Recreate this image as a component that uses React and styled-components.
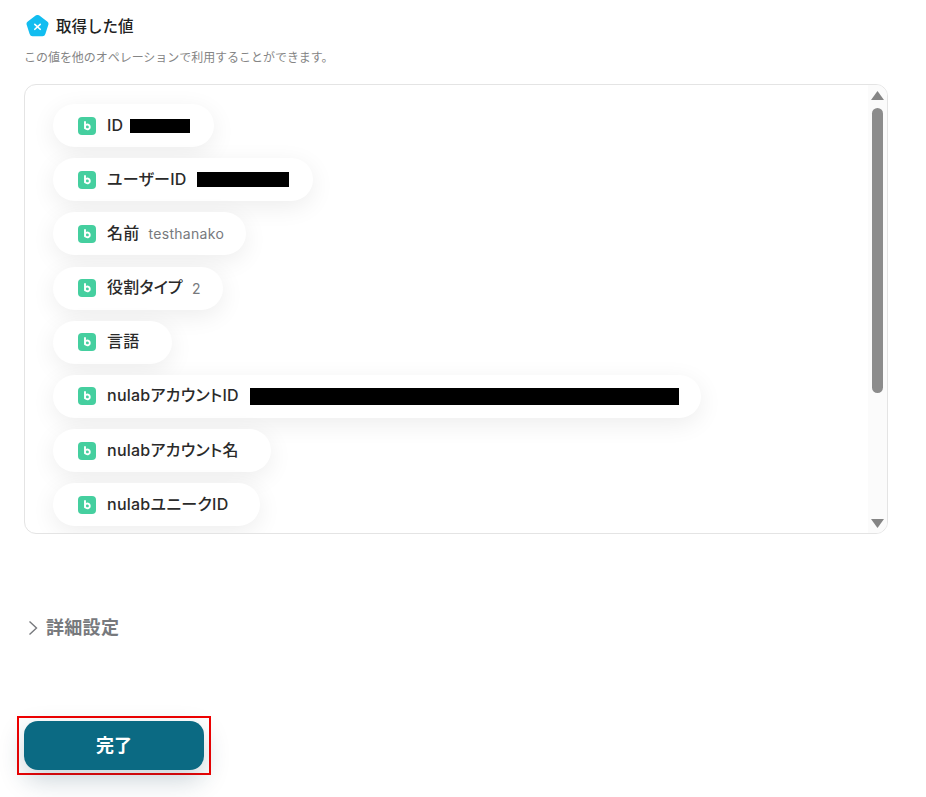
import React from "react";
import styled, { createGlobalStyle } from "styled-components";

const GlobalStyle = createGlobalStyle`
    html, body {
        margin: 0;
        padding: 0;
        background: #fff;
        font-family: Inter, "Noto Sans CJK JP", sans-serif;
    }
`;

const Page = styled.div`
    width: 926px;
    height: 797px;
    padding: 15px 38px 0 24px;
    box-sizing: border-box;
    overflow: hidden;
`;

const TitleRow = styled.div`
    display: flex;
    align-items: center;
    gap: 7px;
    height: 22px;
    padding-left: 2px;
`;

const Title = styled.h2`
    margin: 0;
    padding-bottom: 2px;
    font-size: 15.5px;
    font-weight: 500;
    color: #222;
`;

const Description = styled.p`
    margin: 11px 0 0;
    height: 20px;
    line-height: 20px;
    font-size: 12px;
    letter-spacing: -0.04px;
    color: #858585;
`;

const Panel = styled.div`
    display: flex;
    height: 450px;
    margin-top: 16px;
    box-sizing: border-box;
    border: 1px solid #e4e4e4;
    border-radius: 12px;
    overflow: hidden;
`;

const ValueList = styled.div`
    flex: 1;
    display: flex;
    flex-direction: column;
    align-items: flex-start;
    gap: 11.2px;
    padding: 19px 0 0 28px;
`;

const Pill = styled.div`
    display: flex;
    align-items: center;
    height: 43px;
    padding: 0 24px 0 25px;
    box-sizing: border-box;
    background: #fff;
    border-radius: 22px;
    box-shadow: 0 6px 24px rgba(0, 0, 0, 0.075);
    white-space: nowrap;
`;

const Badge = styled.span`
    display: flex;
    align-items: center;
    justify-content: center;
    flex: none;
    width: 18px;
    height: 18px;
    margin-right: 11px;
    border-radius: 4px;
    background: #45cf9f;
`;

const Label = styled.span`
    margin-right: 8px;
    padding-bottom: 2px;
    font-size: 16px;
    line-height: 22px;
    font-weight: 500;
    font-feature-settings: "palt";
    letter-spacing: 0.25px;
    color: #2a2a2a;
`;

const Value = styled.span`
    margin: 0 -2px 0 1px;
    font-size: 14px;
    letter-spacing: 0.3px;
    color: #77797d;
`;

const Redacted = styled.span`
    display: block;
    margin-left: ${(props) => props.$gap}px;
    margin-right: ${(props) => props.$trail || 0}px;
    width: ${(props) => props.$width}px;
    height: ${(props) => props.$height}px;
    background: #000;
`;

const ScrollTrack = styled.div`
    flex: none;
    width: 19px;
    background: #fbfbfb;
    display: flex;
    flex-direction: column;
    align-items: center;
    padding: 6px 0 5px;
    box-sizing: border-box;
`;

const ScrollThumb = styled.div`
    width: 11px;
    height: 285px;
    margin-top: 8px;
    border-radius: 6px;
    background: #8c8c8c;
`;

const Spacer = styled.div`
    flex: 1;
`;

const DetailRow = styled.div`
    display: flex;
    align-items: center;
    gap: 7px;
    margin-top: 82px;
    height: 24px;
    padding-left: 3px;
`;

const DetailLabel = styled.span`
    font-size: 18px;
    line-height: 24px;
    font-weight: 700;
    letter-spacing: 0.3px;
    color: #77797d;
`;

const ButtonFrame = styled.div`
    width: 194px;
    height: 59px;
    margin: 76px 0 0 -7px;
    box-sizing: border-box;
    border: 2px solid #f00000;
    padding: 3px 5px;
`;

const DoneButton = styled.button`
    display: block;
    width: 180px;
    height: 49px;
    padding: 0 0 4px;
    border: none;
    border-radius: 14px;
    background: #0b6a83;
    color: #fff;
    font-family: inherit;
    font-size: 18px;
    font-weight: 700;
    box-shadow: 0 10px 26px rgba(20, 60, 80, 0.22);
`;

function BacklogIcon() {
    return (
        <svg width="9" height="10" viewBox="0 0 9 10" fill="none">
            <path
                d="M2 1v6.2M2 5.8a2.4 2.4 0 1 1 0 .2"
                stroke="#fff"
                strokeWidth="1.9"
                strokeLinecap="round"
            />
        </svg>
    );
}

function PentagonIcon() {
    return (
        <svg width="23" height="22" viewBox="1.2 1 21.6 21.3">
            <path
                d="M10.2 1.6a3 3 0 0 1 3.6 0l7.6 5.6a3 3 0 0 1 1.1 3.3l-2.9 8.9a3 3 0 0 1-2.9 2.1H7.3a3 3 0 0 1-2.9-2.1l-2.9-8.9a3 3 0 0 1 1.1-3.3z"
                fill="#12bdf0"
            />
            <path
                d="M9.4 10l5.2 4.8M14.6 10l-5.2 4.8"
                stroke="#fff"
                strokeWidth="1.6"
                strokeLinecap="round"
            />
        </svg>
    );
}

function ChevronIcon() {
    return (
        <svg width="12" height="16" viewBox="0 0 12 16" fill="none">
            <path d="M2.5 1.5L9.5 8l-7 6.5" stroke="#77797d" strokeWidth="1.4" />
        </svg>
    );
}

function ArrowIcon({ down }) {
    return (
        <svg width="13" height="9" viewBox="0 0 13 9">
            <path
                d={down ? "M0 0h13L6.5 9z" : "M6.5 0L13 9H0z"}
                fill="#858585"
            />
        </svg>
    );
}

const rows = [
    { label: "ID", redacted: { gap: -1, width: 60, height: 14 } },
    { label: "ユーザーID", redacted: { gap: 2, width: 92, height: 15 } },
    { label: "名前", value: "testhanako" },
    { label: "役割タイプ", value: "2" },
    { label: "言語" },
    { label: "nulabアカウントID", redacted: { gap: 3, trail: -2, width: 429, height: 17 } },
    { label: "nulabアカウント名" },
    { label: "nulabユニークID" },
];

function App() {
    return (
        <Page>
            <GlobalStyle />
            <TitleRow>
                <PentagonIcon />
                <Title>取得した値</Title>
            </TitleRow>
            <Description>この値を他のオペレーションで利用することができます。</Description>
            <Panel>
                <ValueList>
                    {rows.map((row) => (
                        <Pill key={row.label}>
                            <Badge>
                                <BacklogIcon />
                            </Badge>
                            <Label>{row.label}</Label>
                            {row.value && <Value>{row.value}</Value>}
                            {row.redacted && (
                                <Redacted
                                    $gap={row.redacted.gap}
                                    $trail={row.redacted.trail}
                                    $width={row.redacted.width}
                                    $height={row.redacted.height}
                                />
                            )}
                        </Pill>
                    ))}
                </ValueList>
                <ScrollTrack>
                    <ArrowIcon />
                    <ScrollThumb />
                    <Spacer />
                    <ArrowIcon down />
                </ScrollTrack>
            </Panel>
            <DetailRow>
                <ChevronIcon />
                <DetailLabel>詳細設定</DetailLabel>
            </DetailRow>
            <ButtonFrame>
                <DoneButton>完了</DoneButton>
            </ButtonFrame>
        </Page>
    );
}

export default App;
